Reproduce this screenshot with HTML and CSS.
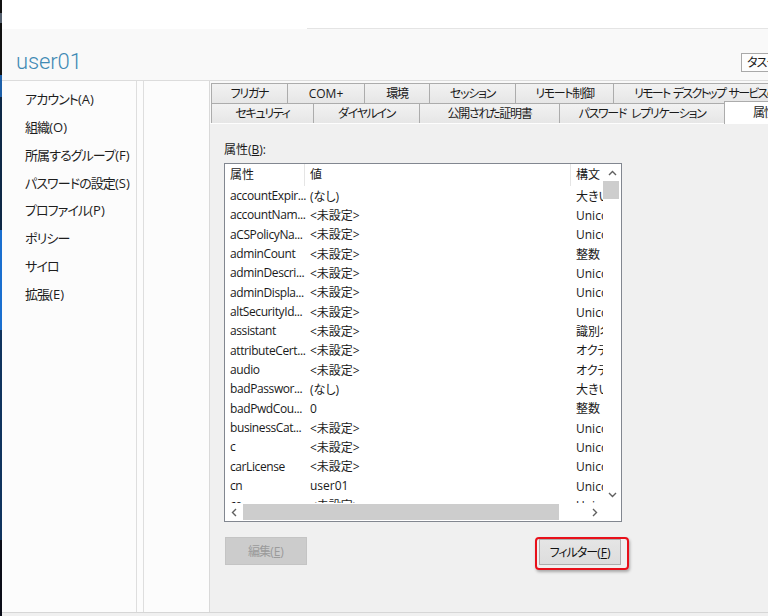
FILE: index.html
```html
<!DOCTYPE html>
<html lang="ja">
<head>
<meta charset="utf-8">
<title>user01</title>
<link rel="stylesheet" href="styles.css">
</head>
<body>
<div class="screen">
  <div class="desk-edge"></div>
  <div class="window">
    <div class="topbar"><div class="topbar-left"></div><div class="topbar-right"></div></div>
    <div class="header">
      <h1 class="title">user01</h1>
      <button class="task-btn">タスク</button>
    </div>
    <div class="main">
      <nav class="nav">
        <div class="nav-item">アカウント<span class="ak">(A)</span></div>
        <div class="nav-item">組織<span class="ak">(O)</span></div>
        <div class="nav-item">所属するグループ<span class="ak">(F)</span></div>
        <div class="nav-item">パスワードの設定<span class="ak">(S)</span></div>
        <div class="nav-item">プロファイル<span class="ak">(P)</span></div>
        <div class="nav-item">ポリシー</div>
        <div class="nav-item">サイロ</div>
        <div class="nav-item">拡張<span class="ak">(E)</span></div>
      </nav>
      <div class="col-a"></div>
      <div class="col-b"></div>
      <div class="tabarea">
        <div class="tabrow">
          <div class="tab w77">フリガナ</div>
          <div class="tab w78">COM+</div>
          <div class="tab w66">環境</div>
          <div class="tab w87">セッション</div>
          <div class="tab w99">リモート制御</div>
          <div class="tab wide">リモート デスクトップ サービスのプロファイル</div>
        </div>
        <div class="tabrow">
          <div class="tab w103">セキュリティ</div>
          <div class="tab w107">ダイヤルイン</div>
          <div class="tab w141">公開された証明書</div>
          <div class="tab w166">パスワード レプリケーション</div>
          <div class="tab selected">属性エディター</div>
        </div>
        <div class="panel">
          <div class="label">属性(<u>B</u>):</div>
          <div class="listbox">
            <div class="lv">
              <div class="lv-head">
                <div class="h1">属性</div>
                <div class="h2">値</div>
                <div class="h3">構文</div>
              </div>
              <div class="lv-row"><div class="c1">accountExpir...</div><div class="c2">(なし)</div><div class="c3">大きい整数/間隔</div></div>
              <div class="lv-row"><div class="c1">accountNam...</div><div class="c2">&lt;未設定&gt;</div><div class="c3">Unicode 文字列</div></div>
              <div class="lv-row"><div class="c1">aCSPolicyNa...</div><div class="c2">&lt;未設定&gt;</div><div class="c3">Unicode 文字列</div></div>
              <div class="lv-row"><div class="c1">adminCount</div><div class="c2">&lt;未設定&gt;</div><div class="c3">整数</div></div>
              <div class="lv-row"><div class="c1">adminDescri...</div><div class="c2">&lt;未設定&gt;</div><div class="c3">Unicode 文字列</div></div>
              <div class="lv-row"><div class="c1">adminDispla...</div><div class="c2">&lt;未設定&gt;</div><div class="c3">Unicode 文字列</div></div>
              <div class="lv-row"><div class="c1">altSecurityId...</div><div class="c2">&lt;未設定&gt;</div><div class="c3">Unicode 文字列</div></div>
              <div class="lv-row"><div class="c1">assistant</div><div class="c2">&lt;未設定&gt;</div><div class="c3">識別名</div></div>
              <div class="lv-row"><div class="c1">attributeCert...</div><div class="c2">&lt;未設定&gt;</div><div class="c3">オクテット文字列</div></div>
              <div class="lv-row"><div class="c1">audio</div><div class="c2">&lt;未設定&gt;</div><div class="c3">オクテット文字列</div></div>
              <div class="lv-row"><div class="c1">badPasswor...</div><div class="c2">(なし)</div><div class="c3">大きい整数/間隔</div></div>
              <div class="lv-row"><div class="c1">badPwdCou...</div><div class="c2">0</div><div class="c3">整数</div></div>
              <div class="lv-row"><div class="c1">businessCat...</div><div class="c2">&lt;未設定&gt;</div><div class="c3">Unicode 文字列</div></div>
              <div class="lv-row"><div class="c1">c</div><div class="c2">&lt;未設定&gt;</div><div class="c3">Unicode 文字列</div></div>
              <div class="lv-row"><div class="c1">carLicense</div><div class="c2">&lt;未設定&gt;</div><div class="c3">Unicode 文字列</div></div>
              <div class="lv-row"><div class="c1">cn</div><div class="c2">user01</div><div class="c3">Unicode 文字列</div></div>
              <div class="lv-row"><div class="c1">co</div><div class="c2">&lt;未設定&gt;</div><div class="c3">Unicode 文字列</div></div>
            </div>
            <div class="vscroll">
              <div class="arrow-box"><svg width="9" height="6" viewBox="0 0 9 6"><polyline points="1,5 4.5,1.5 8,5" fill="none" stroke="#606060" stroke-width="1.4"/></svg></div>
              <div class="vthumb"></div>
              <div class="spacer"></div>
              <div class="arrow-box"><svg width="9" height="6" viewBox="0 0 9 6"><polyline points="1,1 4.5,4.5 8,1" fill="none" stroke="#606060" stroke-width="1.4"/></svg></div>
            </div>
            <div class="hscroll">
              <div class="arrow-box"><svg width="6" height="9" viewBox="0 0 6 9"><polyline points="5,1 1.5,4.5 5,8" fill="none" stroke="#606060" stroke-width="1.4"/></svg></div>
              <div class="hthumb"></div>
              <div class="spacer"></div>
              <div class="arrow-box"><svg width="6" height="9" viewBox="0 0 6 9"><polyline points="1,1 4.5,4.5 1,8" fill="none" stroke="#606060" stroke-width="1.4"/></svg></div>
            </div>
            <div class="corner"></div>
          </div>
          <div class="btnrow">
            <button class="btn btn-disabled">編集<span class="ak">(<u>E</u>)</span></button>
            <div class="filter-wrap"><button class="btn btn-filter">フィルター<span class="ak">(<u>F</u>)</span></button></div>
          </div>
        </div>
      </div>
    </div>
    <div class="footer"></div>
  </div>
</div>
</body>
</html>
```

FILE: styles.css
```css
* { box-sizing: border-box; }
html, body { margin: 0; padding: 0; width: 768px; height: 616px; overflow: hidden; background: #fff; }
body {
  font-family: "Open Sans", "Noto Sans CJK JP", sans-serif;
  font-size: 12px;
  color: #1a1a1a;
  font-feature-settings: "palt";
}
.ak { letter-spacing: 0; }
.screen { display: flex; width: 768px; height: 616px; }
.desk-edge {
  width: 2px; flex: none;
  background: linear-gradient(to bottom,
    #111 0 13px, #55606e 13px 23px, #111 23px 75px, #1d5fa8 75px 97px,
    #0e2846 97px 230px, #1a6fcf 230px 330px, #10345e 330px 540px, #0b0d18 540px 616px);
}
.window { flex: 1; min-width: 0; display: flex; flex-direction: column; overflow: hidden; }

.topbar { height: 29px; flex: none; display: flex; background: #fff; }
.topbar-left { width: 305px; }
.topbar-right { flex: 1; border-bottom: 1px solid #e4e4e4; }

.header {
  height: 52px; flex: none; display: flex; align-items: flex-start;
  background: #f9f9f9; border-bottom: 1px solid #dcdcdc;
}
.title {
  margin: 19px 0 0 14px;
  font-family: Roboto, "Open Sans", sans-serif;
  font-weight: 300; font-size: 22px; line-height: 28px;
  color: #3f8ab4; letter-spacing: -0.1px;
}
.task-btn {
  margin: 24px -63px 0 auto;
  width: 90px; height: 19px; padding: 0 0 0 5px;
  text-align: left;
  background: #fdfdfd; border: 1px solid #a9a9a9;
  font: 12px "Open Sans", "Noto Sans CJK JP", sans-serif;
  font-feature-settings: "palt";
  letter-spacing: -1px;
  color: #1a1a1a; line-height: 16px;
}

.main { height: 531px; flex: none; display: flex; }
.nav {
  width: 135px; flex: none; background: #fcfcfc;
  border-right: 1px solid #dedede;
  padding: 5px 0 0 23px;
}
.nav-item {
  height: 27.86px; line-height: 27.86px; font-size: 13px; color: #1e1e1e;
  white-space: nowrap; letter-spacing: -0.9px;
}
.col-a { width: 7px; flex: none; background: #fcfcfc; border-right: 1px solid #dedede; }
.col-b { width: 66px; flex: none; background: #fcfcfc; border-right: 1px solid #d9d9d9; }

.tabarea {
  flex: 1; min-width: 0; overflow: hidden;
  display: flex; flex-direction: column;
  background: #f9f9f9; padding-top: 2px;
}
.tabrow { height: 20px; flex: none; display: flex; padding-left: 1px; }
.tab {
  flex: none; height: 20px; margin-right: -1px;
  border: 1px solid #acacac; border-bottom: none;
  background: linear-gradient(#f2f2f2, #e6e6e6);
  text-align: center; line-height: 19px; white-space: nowrap; color: #1a1a1a;
  letter-spacing: -1.3px; word-spacing: 3px;
}
.w77 { width: 77px; } .w78 { width: 78px; } .w66 { width: 66px; }
.w87 { width: 87px; } .w99 { width: 99px; } .w103 { width: 103px; }
.w107 { width: 107px; } .w141 { width: 141px; } .w166 { width: 166px; }
.w78 { letter-spacing: 0; }
.wide { padding: 0 20px; letter-spacing: -1.7px; word-spacing: 2px; }
.tab.selected {
  background: #fff; padding: 0 28px;
  margin-top: -2px; height: 23px; line-height: 22px;
  position: relative; z-index: 1;
}

.panel {
  flex: 1; background: #f0f0f0; border-top: 1px solid #fdfdfd;
  padding: 18px 0 0 14px;
}
.label { height: 16px; line-height: 16px; color: #1a1a1a; }
.listbox {
  margin-top: 5px; width: 398px; height: 359px;
  border: 1px solid #828790; background: #fff;
  display: grid; grid-template-columns: 378px 18px; grid-template-rows: 339px 18px;
}
.lv { overflow: hidden; }
.lv-head { height: 22px; display: flex; }
.lv-head > div { flex: none; line-height: 22px; padding-left: 5px; white-space: nowrap; overflow: hidden; }
.h1 { width: 80px; border-right: 1px solid #e5e5e5; }
.h2 { width: 266px; border-right: 1px solid #e5e5e5; }
.h3 { width: 32px; }
.lv-row { height: 19.33px; display: flex; align-items: center; }
.c1, .c2, .c3 { flex: none; white-space: nowrap; overflow: hidden; }
.c1 { width: 83px; padding-left: 5px; letter-spacing: -0.4px; }
.c2 { width: 263px; padding-left: 2px; }
.c3 { width: 32px; padding-left: 5px; }

.vscroll { display: flex; flex-direction: column; background: #fff; }
.arrow-box { flex: none; width: 17px; height: 17px; display: flex; align-items: center; justify-content: center; }
.vscroll .arrow-box { width: 18px; }
.vthumb { width: 16px; height: 18px; background: #cdcdcd; flex: none; }
.spacer { flex: 1; }
.hscroll { display: flex; background: #fff; }
.hscroll .arrow-box { height: 18px; }
.hthumb { width: 316px; height: 16px; margin: 1px 0 0 1px; background: #cdcdcd; flex: none; }
.corner { background: #fff; }

.btnrow {
  width: 398px; margin-top: 15px; padding: 0 1px;
  display: flex; justify-content: space-between; align-items: center;
}
.btn {
  display: block; width: 82px; padding: 0;
  font: 12px "Open Sans", "Noto Sans CJK JP", sans-serif;
  font-feature-settings: "palt";
  letter-spacing: -1px;
}
.btn-disabled { height: 28px; background: #cccccc; border: 1px solid #c4c4c4; color: #9b9b9b; }
.btn-filter { height: 26px; background: linear-gradient(#e5e5e5, #dddddd); border: 1px solid #adadad; color: #111; }
.filter-wrap { position: relative; margin-top: 2px; }
.filter-wrap::after {
  content: ""; position: absolute;
  left: -4px; right: -8px; top: -2px; bottom: -5px;
  border: 2px solid #e8101a; border-radius: 4px;
  box-shadow: 1px 2px 3px rgba(0, 0, 0, 0.3);
  pointer-events: none;
}

.footer { height: 4px; flex: none; background: #f0f0f0; border-top: 1px solid #d6d6d6; }
```
